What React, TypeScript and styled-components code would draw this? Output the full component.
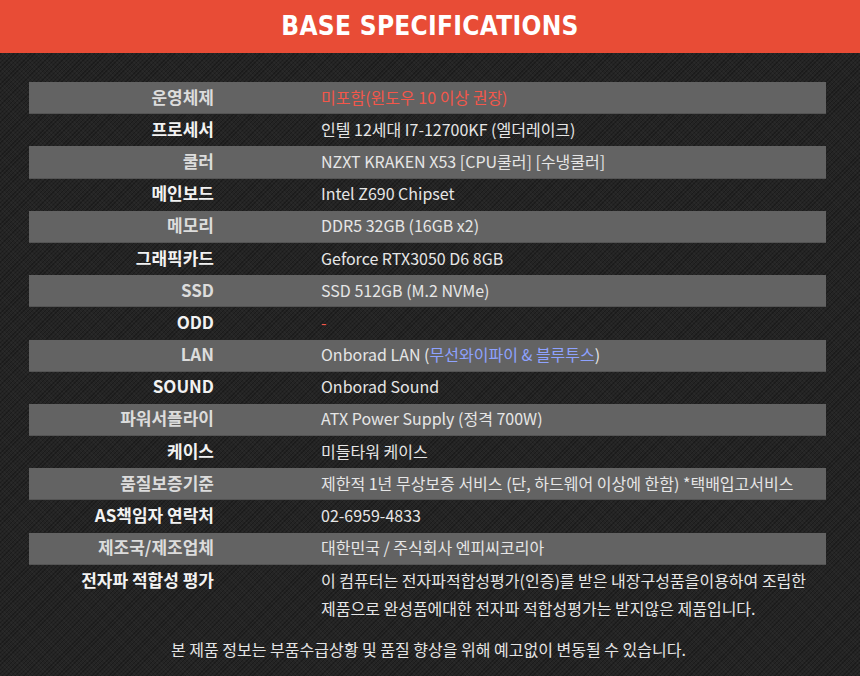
import React from 'react';
import styled, { createGlobalStyle } from 'styled-components';

const GlobalStyle = createGlobalStyle`
  html, body {
    margin: 0;
    padding: 0;
    background: #232323;
  }
  body {
    font-family: "Noto Sans CJK KR", "Noto Sans", sans-serif;
  }
`;

interface SpecRow {
  label: string;
  value: React.ReactNode;
}

const Page = styled.div`
  width: 860px;
  height: 676px;
  overflow: hidden;
  background-color: #242424;
  background-image:
    repeating-linear-gradient(45deg, rgba(255, 255, 255, 0.025) 0 1px, transparent 1px 3px),
    repeating-linear-gradient(-45deg, rgba(0, 0, 0, 0.25) 0 1px, transparent 1px 3px);
  display: flex;
  flex-direction: column;
`;

const Header = styled.header`
  height: 53px;
  background: #e84c36;
  display: flex;
  align-items: center;
  justify-content: center;
`;

const Title = styled.h1`
  margin: 0;
  font-family: "DejaVu Sans Condensed", "DejaVu Sans", sans-serif;
  font-weight: 900;
  font-size: 26px;
  letter-spacing: 0.3px;
  color: #ffffff;
  line-height: 1;
  padding-bottom: 2px;
`;

const Table = styled.div`
  margin: 29px 34px 0 29px;
  display: flex;
  flex-direction: column;
`;

const Row = styled.div<{ shaded: boolean; tall?: boolean }>`
  display: grid;
  grid-template-columns: 185px 1fr;
  column-gap: 107px;
  align-items: ${p => (p.tall ? 'start' : 'center')};
  height: ${p => (p.tall ? '57px' : '32.2px')};
  padding-top: ${p => (p.tall ? '1px' : '0')};
  padding-bottom: ${p => (p.tall ? '0' : '3px')};
  box-sizing: border-box;
  background: ${p => (p.shaded ? '#636363' : 'transparent')};
  box-shadow: ${p => (p.shaded ? 'inset 0 -1px 0 rgba(0,0,0,0.15)' : 'none')};
`;

const Label = styled.div<{ shaded: boolean }>`
  text-align: right;
  font-weight: 700;
  font-size: 17px;
  line-height: 28px;
  color: ${p => (p.shaded ? '#dcdcdc' : '#f2f2f2')};
  white-space: nowrap;
`;

const Value = styled.div`
  font-size: 16px;
  line-height: 28px;
  color: #e6e6e6;
  white-space: nowrap;
`;

const Red = styled.span`
  color: #f4574a;
`;

const Blue = styled.span`
  color: #8ea2ff;
`;

const Notice = styled.p`
  margin: 13px 0 0;
  text-align: center;
  font-size: 16px;
  line-height: 28px;
  color: #e4e4e4;
  padding-right: 3px;
`;

const rows: SpecRow[] = [
  { label: '운영체제', value: <Red>미포함(윈도우 10 이상 권장)</Red> },
  { label: '프로세서', value: '인텔 12세대 I7-12700KF (엘더레이크)' },
  { label: '쿨러', value: 'NZXT KRAKEN X53 [CPU쿨러] [수냉쿨러]' },
  { label: '메인보드', value: 'Intel Z690 Chipset' },
  { label: '메모리', value: 'DDR5 32GB (16GB x2)' },
  { label: '그래픽카드', value: 'Geforce RTX3050 D6 8GB' },
  { label: 'SSD', value: 'SSD 512GB (M.2 NVMe)' },
  { label: 'ODD', value: <Red>-</Red> },
  {
    label: 'LAN',
    value: (
      <>
        Onborad LAN (<Blue>무선와이파이 &amp; 블루투스</Blue>)
      </>
    ),
  },
  { label: 'SOUND', value: 'Onborad Sound' },
  { label: '파워서플라이', value: 'ATX Power Supply (정격 700W)' },
  { label: '케이스', value: '미들타워 케이스' },
  { label: '품질보증기준', value: '제한적 1년 무상보증 서비스 (단, 하드웨어 이상에 한함) *택배입고서비스' },
  { label: 'AS책임자 연락처', value: '02-6959-4833' },
  { label: '제조국/제조업체', value: '대한민국 / 주식회사 엔피씨코리아' },
  {
    label: '전자파 적합성 평가',
    value: (
      <>
        이 컴퓨터는 전자파적합성평가(인증)를 받은 내장구성품을이용하여 조립한
        <br />
        제품으로 완성품에대한 전자파 적합성평가는 받지않은 제품입니다.
      </>
    ),
  },
];

const App: React.FC = () => {
  return (
    <>
      <GlobalStyle />
      <Page>
        <Header>
          <Title>BASE SPECIFICATIONS</Title>
        </Header>
        <Table>
          {rows.map((row, i) => {
            const shaded = i % 2 === 0;
            const tall = i === rows.length - 1;
            return (
              <Row key={row.label} shaded={shaded} tall={tall}>
                <Label shaded={shaded}>{row.label}</Label>
                <Value>{row.value}</Value>
              </Row>
            );
          })}
        </Table>
        <Notice>본 제품 정보는 부품수급상황 및 품질 향상을 위해 예고없이 변동될 수 있습니다.</Notice>
      </Page>
    </>
  );
};

export default App;
